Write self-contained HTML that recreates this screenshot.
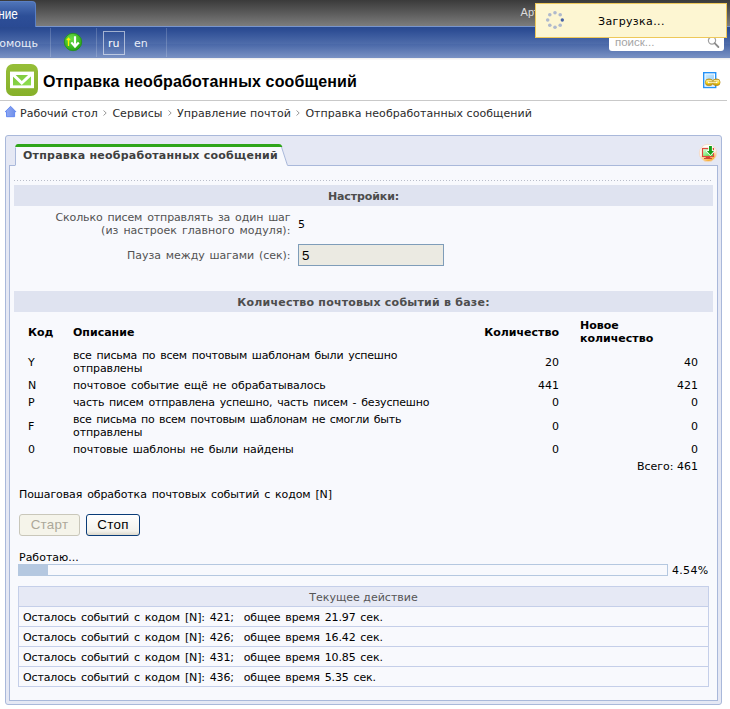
<!DOCTYPE html>
<html lang="ru">
<head>
<meta charset="utf-8">
<title>Отправка необработанных сообщений</title>
<style>
html,body{margin:0;padding:0;}
body{width:730px;height:709px;overflow:hidden;background:#fff;position:relative;
  font-family:"DejaVu Sans","Liberation Sans",sans-serif;font-size:11px;line-height:13px;color:#000;}
.abs{position:absolute;white-space:nowrap;}
/* top bars */
#topbar{position:absolute;left:0;top:0;width:730px;height:26px;background:linear-gradient(#3a3a3a,#7c7c7c);}
#topline{position:absolute;left:0;top:26px;width:730px;height:1px;background:#7995cc;}
#bluebar{position:absolute;left:0;top:27px;width:730px;height:31px;background:linear-gradient(#29498f,#2d4d94 10%,#4f6dab 55%,#4a68a8 56%,#7a92c4);border-bottom:1px solid #f0efef;box-shadow:0 1px 0 #f8f8f8;}
#toptab{position:absolute;left:-6px;top:1px;width:42px;height:26px;border:1px solid #5a7fc4;border-bottom:none;border-radius:4px 4px 0 0;
  background:linear-gradient(#4f74b8,#2d4f98 55%,#2a4a93);box-sizing:border-box;}
.sep{position:absolute;top:28px;width:1px;height:29px;background:rgba(255,255,255,.18);}
.menutxt{color:#e8edf7;}
#rubox{position:absolute;left:103px;top:31px;width:22px;height:24px;border:1px solid rgba(255,255,255,.55);box-sizing:border-box;}
/* loading */
#loading{position:absolute;left:535px;top:3px;width:192px;height:35px;box-sizing:border-box;background:#fdf6d2;border:1px solid #eec85a;}
#search{position:absolute;left:609px;top:33px;width:115px;height:18px;background:#fff;border-radius:3px;}
/* panel */
#outer{position:absolute;left:5px;top:135px;width:717px;height:570px;box-sizing:border-box;background:#e5e8f4;border:1px solid #a9b8da;border-radius:3px;}
#pane{position:absolute;left:9px;top:165px;width:709px;height:536px;box-sizing:border-box;background:#f8f9fd;border:1px solid #a9b8da;}
.sect{position:absolute;left:14px;width:699px;height:21px;background:#dfe3f0;text-align:center;font-weight:bold;color:#4d4d4d;line-height:23px;overflow:hidden;}
.dots{position:absolute;left:14px;top:180px;width:698px;height:1px;background:repeating-linear-gradient(90deg,#b9bdc9 0 1px,transparent 1px 3px);}
.lbl{color:#525252;text-align:right;}
.b{font-weight:bold;}
.bc{color:#2b2b2b;letter-spacing:.04px;}
.bc .chev{display:inline-block;vertical-align:1px;margin:0 5px 0 5.5px;}
.r{text-align:right;}
.logrow{position:absolute;left:18px;width:691px;height:21px;box-sizing:border-box;border:1px solid #c5cfe9;}
</style>
</head>
<body>
<!-- top dark bar -->
<div id="topbar"></div>
<div id="topline"></div>
<div id="bluebar"></div>
<div id="toptab"></div>
<div class="abs" style="left:-36px;top:5px;font:14px/18px 'Liberation Sans',sans-serif;color:#fff;transform:scaleX(.84);transform-origin:100% 50%;width:53.4px;text-align:right;">рование</div>
<div class="abs" style="left:520.6px;top:6px;font:11px/13px 'Liberation Sans',sans-serif;color:#dcdcdc;">Артём</div>

<!-- blue bar items -->
<div class="abs menutxt" style="left:-9px;top:37px;">Помощь</div>
<div class="sep" style="left:50px"></div>
<div class="sep" style="left:96px"></div>
<div class="sep" style="left:166px"></div>
<svg class="abs" style="left:63px;top:32px" width="20" height="20" viewBox="0 0 20 20">
  <defs><radialGradient id="gg" cx="40%" cy="30%" r="70%"><stop offset="0" stop-color="#6cdc48"/><stop offset="1" stop-color="#27a716"/></radialGradient></defs>
  <circle cx="10" cy="10" r="8.7" fill="url(#gg)" stroke="#228f16" stroke-width=".8"/>
  <path d="M5.5 14V6.5M3.8 8.2L5.5 6.2L7.2 8.2" stroke="#fff200" stroke-width="1.3" fill="none"/>
  <path d="M12 4.3V14M8.3 10.4L12 14.7L15.8 10.4" stroke="#fff" stroke-width="2.2" fill="none"/>
</svg>
<div id="rubox"></div>
<div class="abs" style="left:108px;top:37px;color:#fff;">ru</div>
<div class="abs menutxt" style="left:134px;top:37px;">en</div>

<!-- search -->
<div id="search"></div>
<div class="abs" style="left:615px;top:36px;font:11.5px 'Liberation Sans',sans-serif;color:#a5a5a5;">поиск...</div>
<svg class="abs" style="left:705.6px;top:35.3px" width="16" height="14" viewBox="0 0 16 14">
  <circle cx="6" cy="5.5" r="3.6" fill="none" stroke="#a0a0a0" stroke-width="1.2"/>
  <path d="M8.6 8.2L12.4 12" stroke="#8c8c8c" stroke-width="1.8" stroke-linecap="round"/>
</svg>

<!-- loading box -->
<div id="loading"></div>
<svg class="abs" style="left:544.4px;top:9.4px" width="22" height="22" viewBox="-11 -11 22 22">
  <g fill="#afb9cd">
    <circle cx="0" cy="-7.3" r="1.8"/><circle cx="5.2" cy="-5.2" r="1.8"/>
    <circle cx="5.2" cy="5.2" r="1.8"/><circle cx="0" cy="7.3" r="1.8"/>
    <circle cx="-5.2" cy="5.2" r="1.8"/><circle cx="-7.3" cy="0" r="1.8"/><circle cx="-5.2" cy="-5.2" r="1.8"/>
  </g>
  <circle cx="7.3" cy="0" r="1.7" fill="#4763a6"/>
</svg>
<div class="abs" style="left:598px;top:15px;letter-spacing:.36px;">Загрузка...</div>

<!-- title -->
<svg class="abs" style="left:6px;top:64px" width="32" height="32" viewBox="0 0 32 32">
  <defs><linearGradient id="mg" x1="0" y1="0" x2="0" y2="1"><stop offset="0" stop-color="#96be38"/><stop offset="1" stop-color="#86b02a"/></linearGradient>
  <linearGradient id="mi" x1="0" y1="0" x2="1" y2="1"><stop offset="0" stop-color="#7cc43a"/><stop offset="1" stop-color="#8fe050"/></linearGradient></defs>
  <rect x="0" y="0" width="32" height="32" rx="7" fill="url(#mg)"/>
  <rect x="4" y="7.6" width="24" height="16.6" fill="#fff"/>
  <rect x="7" y="11" width="18" height="10.4" fill="url(#mi)"/>
  <path d="M6.6 10.2L15.8 19L25.2 10.2" fill="none" stroke="#fff" stroke-width="3"/>
</svg>
<div class="abs" style="left:43px;top:72px;font:bold 16px/19px 'Liberation Sans',sans-serif;color:#000;letter-spacing:.15px;">Отправка необработанных сообщений</div>
<div class="abs" style="left:0;top:100px;width:727px;height:1px;background:#c9c9c9;"></div>

<!-- doc/link icon -->
<svg class="abs" style="left:702px;top:71px" width="20" height="18" viewBox="0 0 20 18">
  <defs><linearGradient id="dg" x1="0" y1="0" x2="1" y2="1"><stop offset="0" stop-color="#c8ecff"/><stop offset=".6" stop-color="#a8d6fb"/><stop offset="1" stop-color="#e4f3ff"/></linearGradient>
  <linearGradient id="lg" x1="0" y1="0" x2="0" y2="1"><stop offset="0" stop-color="#c79a12"/><stop offset=".25" stop-color="#fff0a0"/><stop offset=".55" stop-color="#ffe11e"/><stop offset="1" stop-color="#b88a08"/></linearGradient></defs>
  <rect x="1.7" y="1.7" width="12" height="14.8" fill="#fff" stroke="#2492f8" stroke-width="1.4"/>
  <rect x="3.4" y="3.4" width="8.6" height="11.4" fill="url(#dg)"/>
  <rect x="3.4" y="8" width="7.4" height="6.6" rx="3" fill="url(#lg)" stroke="#b48608" stroke-width=".7"/>
  <rect x="10.8" y="8" width="7.2" height="6.6" rx="3" fill="url(#lg)" stroke="#b48608" stroke-width=".7"/>
  <rect x="6.2" y="10.5" width="9" height="1.7" rx=".8" fill="#fff8c8" stroke="#b48608" stroke-width=".5"/>
  <circle cx="6.6" cy="11.4" r=".8" fill="#fff"/><circle cx="14.7" cy="11.4" r=".8" fill="#fff"/>
</svg>

<!-- breadcrumb -->
<svg class="abs" style="left:4px;top:105px" width="13" height="13" viewBox="0 0 13 13">
  <defs><linearGradient id="hg" x1="0" y1="0" x2="1" y2="0"><stop offset="0" stop-color="#93abf3"/><stop offset="1" stop-color="#6b8ce9"/></linearGradient></defs>
  <path d="M6.6 1.3L11.9 6.7H10.6V11.7H2.5V6.7H1.2Z" fill="url(#hg)" stroke="#5b83f0" stroke-width=".9" stroke-linejoin="miter"/>
</svg>
<div class="abs bc" style="left:20px;top:107px;"><span>Рабочий стол</span><svg class="chev" width="4" height="6" viewBox="0 0 4 6"><path d="M.5 .5L3.2 3L.5 5.5" fill="none" stroke="#9a9a9a" stroke-width="1"/></svg><span>Сервисы</span><svg class="chev" width="4" height="6" viewBox="0 0 4 6"><path d="M.5 .5L3.2 3L.5 5.5" fill="none" stroke="#9a9a9a" stroke-width="1"/></svg><span>Управление почтой</span><svg class="chev" width="4" height="6" viewBox="0 0 4 6"><path d="M.5 .5L3.2 3L.5 5.5" fill="none" stroke="#9a9a9a" stroke-width="1"/></svg><span>Отправка необработанных сообщений</span></div>

<!-- panel -->
<div id="outer"></div>
<div id="pane"></div>
<!-- tab -->
<svg class="abs" style="left:14px;top:143px" width="280" height="24" viewBox="0 0 280 24">
  <path d="M1.5 24V4.5Q1.5 2.5 3.5 2.5H264Q267 2.5 268 5L273.8 23V24Z" fill="#f8f9fd" stroke="none"/>
  <path d="M1.5 22V4.5" stroke="#a9b8da" stroke-width="1" fill="none"/>
  <path d="M267.5 4L273.5 22.5" stroke="#a9b8da" stroke-width="1" fill="none"/>
  <path d="M1.2 4Q1.6 1 4 1H265Q267.2 1 268 3L268.3 4Z" fill="#2fa51a"/>
</svg>
<div class="abs b" id="tabt" style="left:23px;top:149px;color:#3f3f3f;letter-spacing:.24px;">Отправка необработанных сообщений</div>

<!-- download icon -->
<svg class="abs" style="left:698px;top:143px" width="20" height="20" viewBox="0 0 20 20">
  <defs><linearGradient id="og" x1="0" y1="0" x2=".35" y2="1"><stop offset="0" stop-color="#fff"/><stop offset=".6" stop-color="#fff8ee"/><stop offset="1" stop-color="#f7b13c"/></linearGradient>
  <linearGradient id="sg" x1="0" y1="0" x2="1" y2="1"><stop offset="0" stop-color="#eaffea"/><stop offset=".5" stop-color="#8df08a"/><stop offset="1" stop-color="#22d822"/></linearGradient></defs>
  <circle cx="10" cy="10" r="8.7" fill="url(#og)" stroke="#f3d9c6" stroke-width=".9"/>
  <rect x="4.5" y="5.5" width="11" height="8" fill="url(#sg)" stroke="#e0483a" stroke-width="1.2"/>
  <path d="M8 14.1H12L12.6 15H13.9V15.9H6V15H7.4Z" fill="#cf4436"/>
  <path d="M11 3H13.9V8.1H16L12.5 11.9L8.9 8.1H11Z" fill="#fff" stroke="#fff" stroke-width="1.6" stroke-linejoin="round"/>
  <path d="M11 3H13.9V8.1H16L12.5 11.9L8.9 8.1H11Z" fill="#18a018"/>
</svg>

<div class="dots"></div>
<div class="sect" style="top:185px;"><span style="letter-spacing:-.1px">Настройки:</span></div>

<div class="abs lbl" style="left:40px;width:250.4px;top:211px;word-spacing:1.5px;"><span style="letter-spacing:-.123px">Сколько писем отправлять за один шаг</span><br><span style="letter-spacing:.008px">(из настроек главного модуля):</span></div>
<div class="abs" style="left:298px;top:218px;">5</div>
<div class="abs lbl" style="left:40px;width:250.4px;top:249px;letter-spacing:-.057px;word-spacing:1.5px;"><span>Пауза между шагами (сек):</span></div>
<div class="abs" style="left:298px;top:244px;width:146px;height:22px;box-sizing:border-box;border:1px solid #7f9db9;background:#ebeae2;font:13.33px/21px 'Liberation Sans',sans-serif;padding-left:3px;">5</div>

<div class="sect" style="top:291px;"><span style="letter-spacing:.23px">Количество почтовых событий в базе:</span></div>

<!-- table -->
<div class="abs b" style="left:28px;top:326px;">Код</div>
<div class="abs b" style="left:73px;top:326px;">Описание</div>
<div class="abs b r" style="left:459px;width:100px;top:326px;">Количество</div>
<div class="abs b" style="left:580px;top:319px;">Новое<br>количество</div>

<div class="abs" style="left:28px;top:356px;">Y</div>
<div class="abs" style="left:73px;top:349px;"><span style="letter-spacing:-.21px;word-spacing:1.5px;">все письма по всем почтовым шаблонам были успешно</span><br><span style="letter-spacing:-.1px">отправлены</span></div>
<div class="abs r" style="left:459px;width:100px;top:356px;">20</div>
<div class="abs r" style="left:598px;width:100px;top:356px;">40</div>

<div class="abs" style="left:28px;top:379px;">N</div>
<div class="abs" style="left:73px;top:379px;letter-spacing:-.067px;word-spacing:1.5px;">почтовое событие ещё не обрабатывалось</div>
<div class="abs r" style="left:459px;width:100px;top:379px;">441</div>
<div class="abs r" style="left:598px;width:100px;top:379px;">421</div>

<div class="abs" style="left:28px;top:396px;">P</div>
<div class="abs" style="left:73px;top:396px;letter-spacing:-.18px;word-spacing:1.5px;">часть писем отправлена успешно, часть писем - безуспешно</div>
<div class="abs r" style="left:459px;width:100px;top:396px;">0</div>
<div class="abs r" style="left:598px;width:100px;top:396px;">0</div>

<div class="abs" style="left:28px;top:420px;">F</div>
<div class="abs" style="left:73px;top:413px;"><span style="letter-spacing:-.286px;word-spacing:1.5px;">все письма по всем почтовым шаблонам не смогли быть</span><br><span style="letter-spacing:-.1px">отправлены</span></div>
<div class="abs r" style="left:459px;width:100px;top:420px;">0</div>
<div class="abs r" style="left:598px;width:100px;top:420px;">0</div>

<div class="abs" style="left:28px;top:443px;">0</div>
<div class="abs" style="left:73px;top:443px;letter-spacing:-.092px;word-spacing:1.5px;">почтовые шаблоны не были найдены</div>
<div class="abs r" style="left:459px;width:100px;top:443px;">0</div>
<div class="abs r" style="left:598px;width:100px;top:443px;">0</div>

<div class="abs r" style="left:548px;width:150px;top:460px;">Всего: 461</div>

<div class="abs" style="left:19px;top:488px;letter-spacing:-.1px;word-spacing:1.5px;">Пошаговая обработка почтовых событий с кодом [N]</div>

<!-- buttons -->
<div class="abs" style="left:19px;top:514px;width:61px;height:22px;box-sizing:border-box;border:1px solid #c9c7ba;border-radius:3px;background:#f5f4ea;color:#aca899;font:13.33px/20px 'Liberation Sans',sans-serif;letter-spacing:.3px;text-align:center;">Старт</div>
<div class="abs" style="left:86px;top:514px;width:54px;height:22px;box-sizing:border-box;border:1px solid #0a3c78;border-radius:3px;background:linear-gradient(#fff,#f3f2ec 80%,#dcd9cc);color:#000;font:13.33px/20px 'Liberation Sans',sans-serif;letter-spacing:.3px;text-align:center;">Стоп</div>

<div class="abs" style="left:19px;top:551px;">Работаю...</div>
<div class="abs" style="left:18px;top:564px;width:650px;height:12px;box-sizing:border-box;border:1px solid #b5c8e0;"></div>
<div class="abs" style="left:18px;top:564px;width:30px;height:12px;background:#b5c8e0;"></div>
<div class="abs" style="left:672px;top:564px;letter-spacing:.3px;">4.54%</div>

<!-- log -->
<div class="logrow" style="top:586px;background:#e6e9f5;text-align:center;color:#555;line-height:21px;">Текущее действие</div>
<div class="logrow" style="top:606px;line-height:21px;padding-left:4px;white-space:pre;letter-spacing:-.13px;word-spacing:1.5px;">Осталось событий с кодом [N]: 421;  общее время 21.97 сек.</div>
<div class="logrow" style="top:626px;line-height:21px;padding-left:4px;white-space:pre;letter-spacing:-.13px;word-spacing:1.5px;">Осталось событий с кодом [N]: 426;  общее время 16.42 сек.</div>
<div class="logrow" style="top:646px;line-height:21px;padding-left:4px;white-space:pre;letter-spacing:-.13px;word-spacing:1.5px;">Осталось событий с кодом [N]: 431;  общее время 10.85 сек.</div>
<div class="logrow" style="top:666px;line-height:21px;padding-left:4px;white-space:pre;letter-spacing:-.13px;word-spacing:1.5px;">Осталось событий с кодом [N]: 436;  общее время 5.35 сек.</div>
</body>
</html>
